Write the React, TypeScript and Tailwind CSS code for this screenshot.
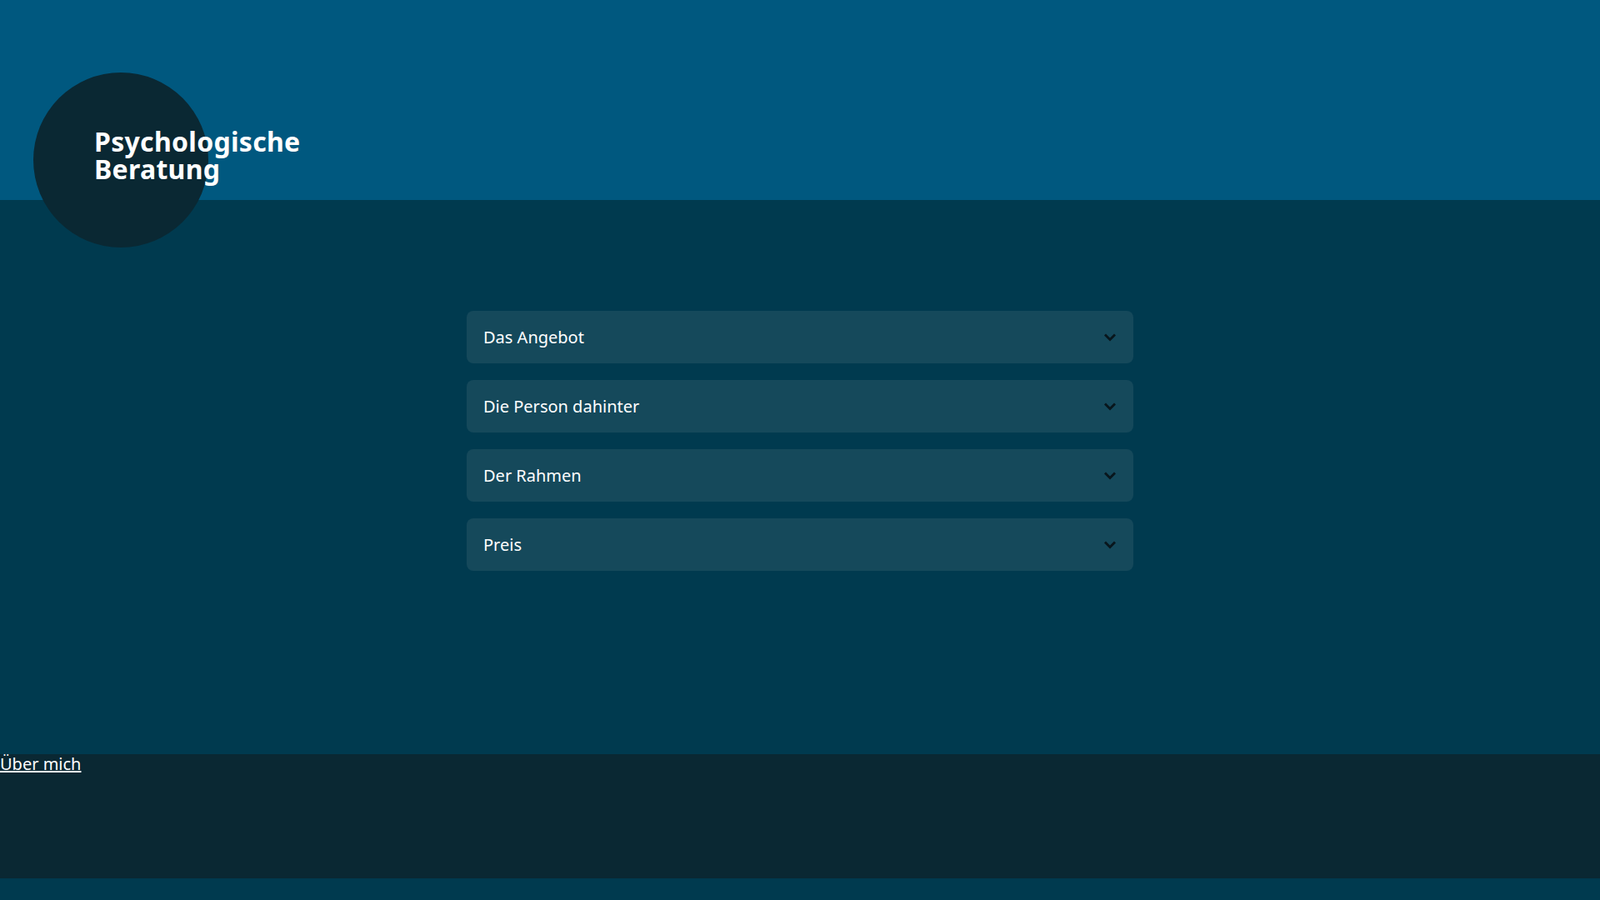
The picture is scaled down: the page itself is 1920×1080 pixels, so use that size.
import React from "react";

const items = ["Das Angebot", "Die Person dahinter", "Der Rahmen", "Preis"];

export default function App() {
  return (
    <div className="min-h-[1080px] bg-[#003a4f] font-[family-name:'Liberation_Sans',Arial,sans-serif]">
      <header className="relative h-[240px] bg-[#00587f]">
        <div className="absolute left-[40px] top-[87px] w-[210px] h-[210px] rounded-full bg-[#0a2833] z-10" />
        <div className="absolute left-[113px] top-[153px] z-20 text-white font-bold text-[32px] leading-[33px] tracking-[0.3px]">
          Psychologische<br />Beratung
        </div>
      </header>
      <main className="h-[665px] pt-[133px] flex flex-col items-center gap-5">
        {items.map((t) => (
          <div key={t} className="w-[800px] h-[63px] rounded-lg bg-[#15495b] flex items-center justify-between pl-5 pr-[18px]">
            <span className="text-white text-[20px]">{t}</span>
            <svg width="20" height="20" viewBox="0 0 24 24" fill="none" stroke="#08161c" strokeWidth="3.4" strokeLinecap="square">
              <path d="M6 9l6 6 6-6" />
            </svg>
          </div>
        ))}
      </main>
      <footer className="h-[149px] bg-[#0a2833]">
        <a href="#" className="text-white underline text-[20px] leading-[24px]">Über mich</a>
      </footer>
    </div>
  );
}
